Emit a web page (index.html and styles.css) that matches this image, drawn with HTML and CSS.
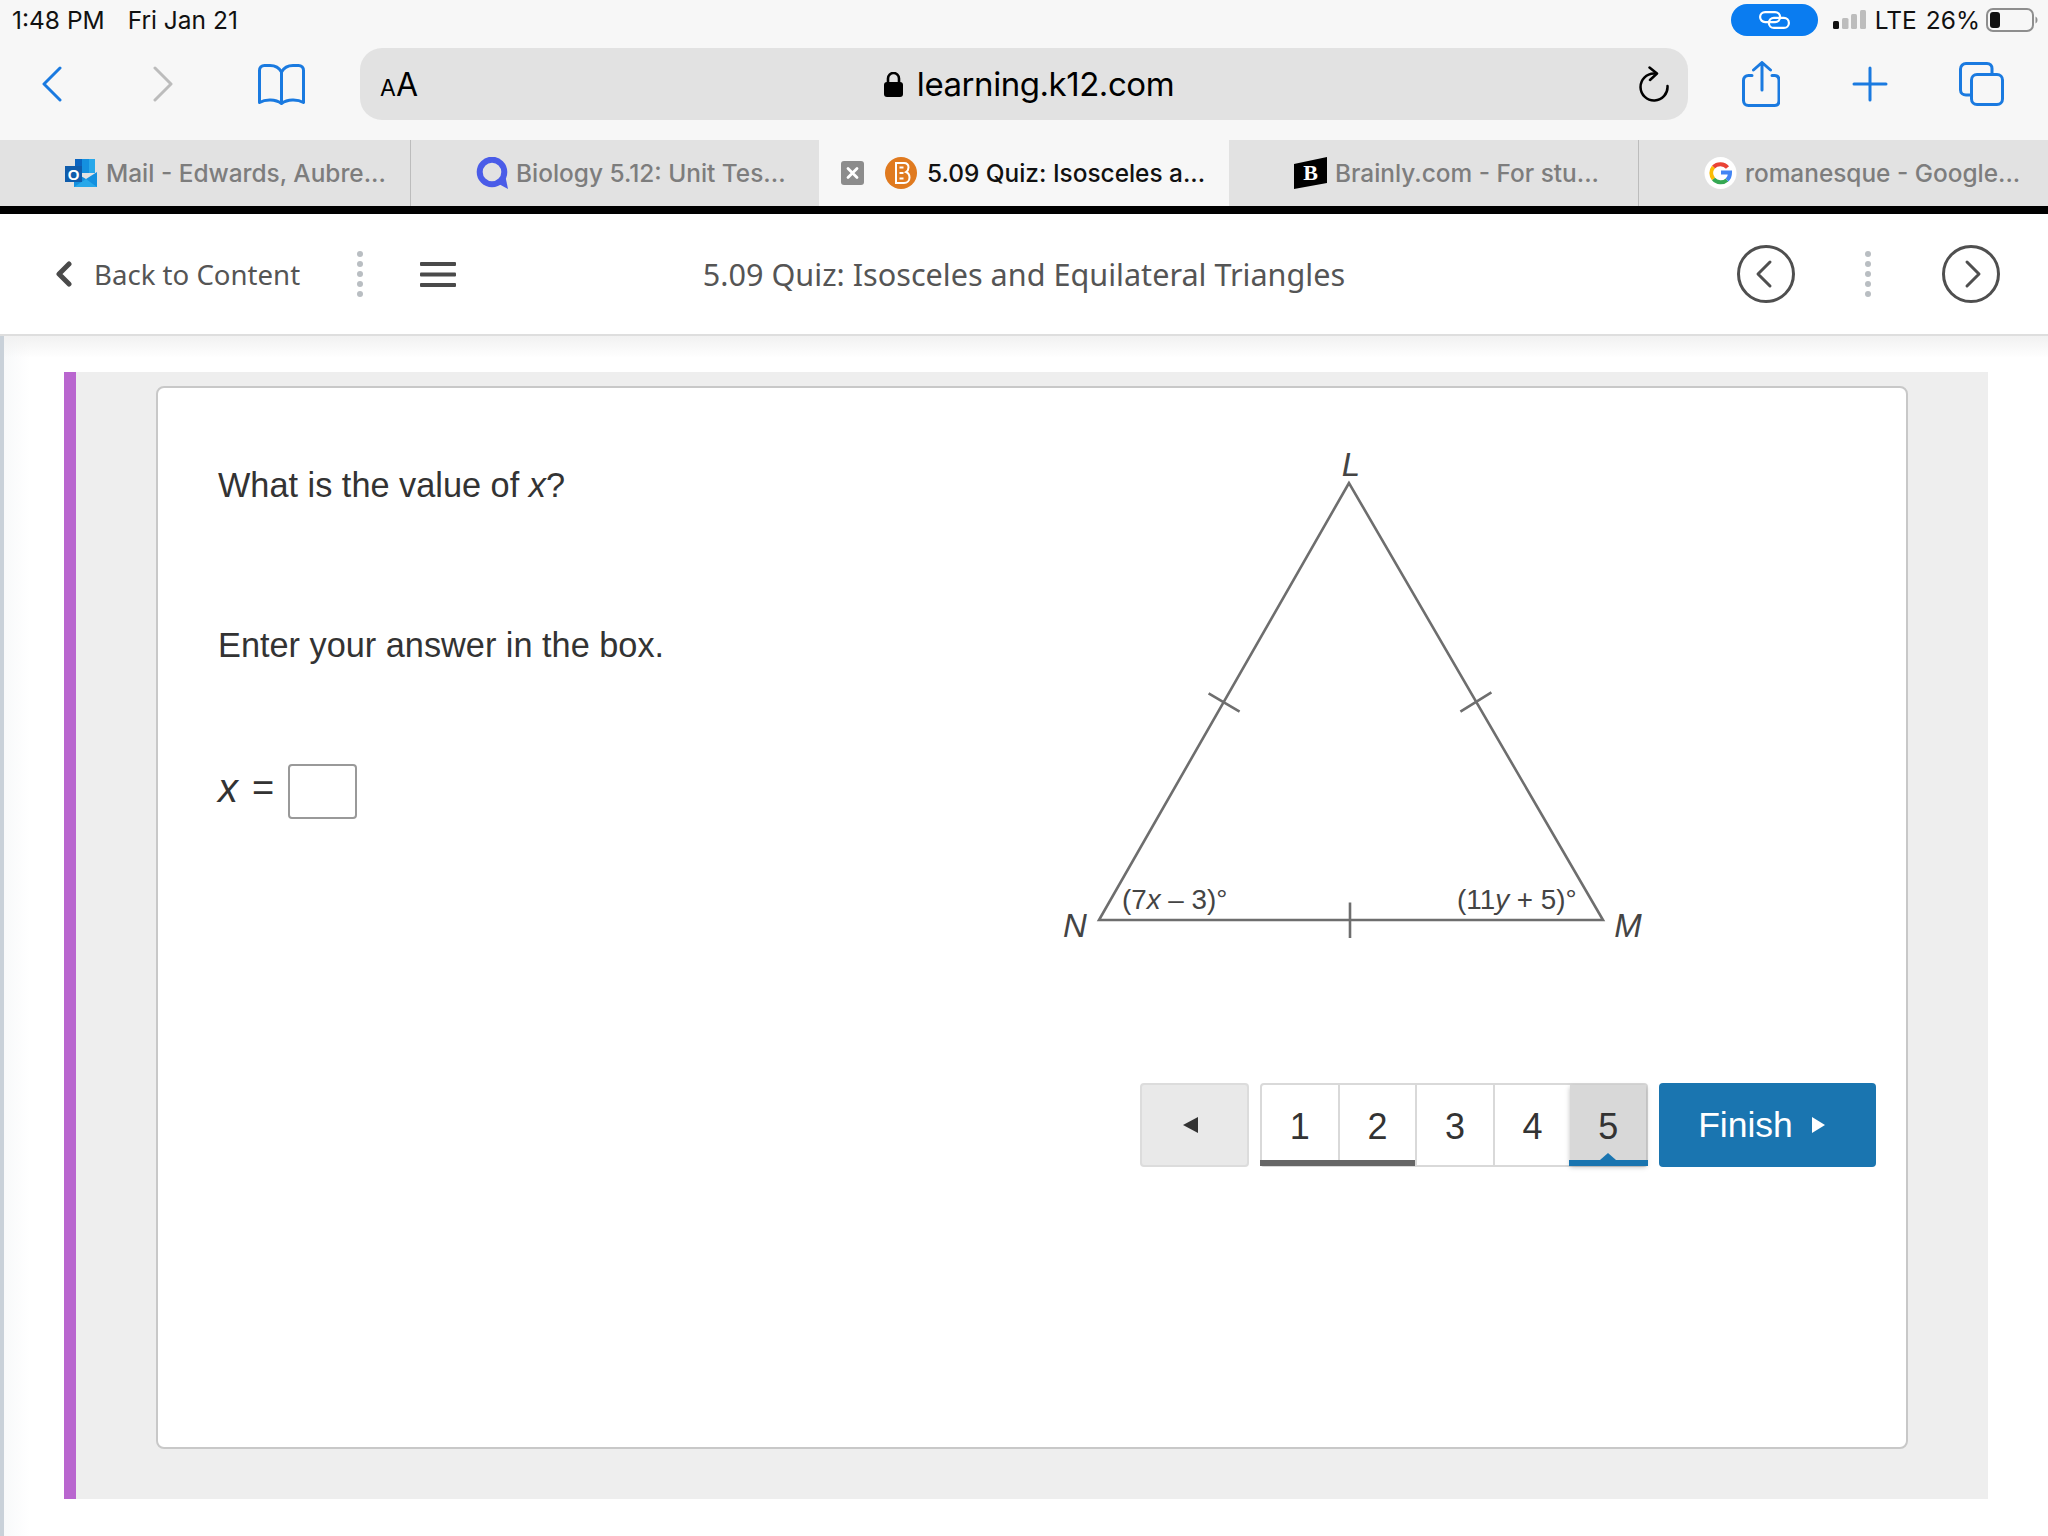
FILE: index.html
```html
<!DOCTYPE html>
<html lang="en">
<head>
<meta charset="utf-8">
<title>5.09 Quiz: Isosceles and Equilateral Triangles</title>
<link rel="stylesheet" href="styles.css">
</head>
<body>
<div class="chrome">
  <div class="status">
    <div class="status-left"><span>1:48 PM</span><span>Fri Jan 21</span></div>
    <div class="status-right">
      <div class="link-pill">
        <svg width="31" height="18" viewBox="0 0 31 18" fill="none" stroke="#fff" stroke-width="2.200"><rect x="1.100" y="1.100" width="20" height="10" rx="5"/><rect x="9.900" y="6.900" width="20" height="10" rx="5"/></svg>
      </div>
      <svg class="signal" width="33" height="19" viewBox="0 0 33 19"><rect x="0" y="11" width="6" height="8" rx="1.500" fill="#111"/><rect x="9" y="8" width="6.500" height="11" rx="1.500" fill="#bdbdbd"/><rect x="18" y="4" width="6" height="15" rx="1.500" fill="#bdbdbd"/><rect x="27" y="0" width="6" height="19" rx="1.500" fill="#bdbdbd"/></svg>
      <span class="lte">LTE</span>
      <span class="pct">26%</span>
      <svg class="battery" width="52" height="24" viewBox="0 0 52 24" fill="none"><rect x="1" y="1" width="46" height="22" rx="6" stroke="#8e8e8e" stroke-width="2"/><rect x="4" y="4" width="10" height="16" rx="3" fill="#111"/><path d="M49.500 8.500c1.500 .8 2 2 2 3.500s-.5 2.700-2 3.500z" fill="#8e8e8e"/></svg>
    </div>
  </div>
  <div class="toolbar">
    <svg class="i-back" width="20" height="36" viewBox="0 0 20 36" fill="none" stroke="#1a7ae0" stroke-width="3" stroke-linecap="round" stroke-linejoin="round"><path d="M18 2 2 18l16 16"/></svg>
    <svg class="i-fwd" width="20" height="36" viewBox="0 0 20 36" fill="none" stroke="#bcbcbc" stroke-width="3" stroke-linecap="round" stroke-linejoin="round"><path d="M2 2l16 16L2 34"/></svg>
    <svg class="i-book" width="47" height="41" viewBox="0 0 47 41" fill="none" stroke="#1a7ae0" stroke-width="3" stroke-linejoin="round" stroke-linecap="round"><path d="M23.500 8C21 3.500 17 1.500 12 1.500H6.500C3.500 1.500 1.500 3.500 1.500 6.500V38.500c6-3.500 16-3.500 22 1 6-4.500 16-4.500 22-1V6.500c0-3-2-5-5-5H35c-5 0-9 2-11.500 6.500zM23.500 8v31"/></svg>
    <div class="url-pill">
      <div class="aa"><span class="aa-small">A</span><span class="aa-big">A</span></div>
      <div class="url">
        <svg width="19" height="25" viewBox="0 0 19 25"><rect x="0" y="10" width="19" height="15" rx="3" fill="#000"/><path d="M4 11V6.500a5.500 5.500 0 0 1 11 0V11" fill="none" stroke="#000" stroke-width="2.600"/></svg>
        <span>learning.k12.com</span>
      </div>
      <svg width="30" height="36" viewBox="0 0 30 36" fill="none" stroke="#000" stroke-width="2.500" stroke-linecap="round" stroke-linejoin="round"><path d="M28.500 20A13.500 13.500 0 1 1 15 7.500"/><path d="M10.500 1.500 18 7.500l-7 6.500"/></svg>
    </div>
    <svg class="i-share" width="38" height="46" viewBox="0 0 38 46" fill="none" stroke="#1a7ae0" stroke-width="3" stroke-linecap="round" stroke-linejoin="round"><path d="M20 29V2M11.500 9 20 1.500 28.500 9M10 14.500H6.500c-3 0-5 2-5 5v20c0 3 2 5 5 5h26c3 0 4.500-2 4.500-5v-20c0-3-1.500-5-4.500-5H30"/></svg>
    <svg class="i-plus" width="36" height="36" viewBox="0 0 36 36" fill="none" stroke="#1a7ae0" stroke-width="3" stroke-linecap="round"><path d="M18 2v32M2 18h32"/></svg>
    <svg class="i-tabs" width="45" height="44" viewBox="0 0 45 44" fill="none" stroke="#1a7ae0" stroke-width="3" stroke-linejoin="round"><path d="M11 33H7c-3 0-5.500-2-5.500-5V7C1.500 4 4 1.500 7 1.500h21c3 0 5 2 5 5V11"/><rect x="12.500" y="12.500" width="31" height="30" rx="5.500"/></svg>
  </div>
  <div class="tabs">
    <div class="tab">
      <svg width="33" height="28" viewBox="0 0 33 28"><rect x="10" y="0" width="7" height="14" fill="#0a64c0"/><rect x="17" y="0" width="7" height="14" fill="#1490df"/><rect x="24" y="0" width="6" height="14" fill="#28a8ea"/><path d="M9 13l12 7 11-7v15H9z" fill="#1490df"/><path d="M9 28l12-8 11 8z" fill="#28a8ea"/><rect x="0" y="7" width="17" height="16" fill="#0f5cab"/><text x="8.500" y="20.500" class="fav-o" text-anchor="middle">O</text></svg>
      <span>Mail - Edwards, Aubre...</span>
    </div>
    <div class="tab">
      <svg width="32" height="32" viewBox="0 0 32 32" fill="none"><circle cx="16" cy="15" r="12.300" stroke="#4a5ce8" stroke-width="6"/><path d="M21 26 32 32 29.500 20z" fill="#4a5ce8"/></svg>
      <span>Biology 5.12: Unit Tes...</span>
    </div>
    <div class="tab tab-active">
      <svg width="23" height="24" viewBox="0 0 23 24"><rect width="23" height="24" rx="3" fill="#8c8c8c"/><path d="M7 7.500l9 9M16 7.500l-9 9" stroke="#fff" stroke-width="2.800" stroke-linecap="round"/></svg>
      <svg width="32" height="32" viewBox="0 0 32 32"><circle cx="16" cy="16" r="16" fill="#e07a1f"/><path d="M11 6h8c3 0 4.500 2 4.500 4.500 0 2-1 3.500-2.500 4.500 2.500 1 3.500 3 3.500 5.500 0 3-2 5.500-5.500 5.500h-8z" fill="none" stroke="#fff" stroke-width="2"/><path d="M14.500 10.500h4M14.500 16h4M14.500 21.500h4" stroke="#fff" stroke-width="1.800"/></svg>
      <span>5.09 Quiz: Isosceles a...</span>
    </div>
    <div class="tab">
      <svg width="33" height="32" viewBox="0 0 33 32"><path d="M0 7 33 0v26L0 32z" fill="#000"/><text x="16.500" y="23" class="fav-b" text-anchor="middle">B</text></svg>
      <span>Brainly.com - For stu...</span>
    </div>
    <div class="tab">
      <svg width="33" height="32" viewBox="0 0 33 32" fill="none"><circle cx="16.500" cy="16" r="16" fill="#fff"/><path d="M23.500 10.500A9.500 9.500 0 0 0 9.500 10" stroke="#ea4335" stroke-width="4"/><path d="M9.500 10a9.500 9.500 0 0 0 0 12" stroke="#fbbc05" stroke-width="4"/><path d="M9.500 22a9.500 9.500 0 0 0 13.500 1" stroke="#34a853" stroke-width="4"/><path d="M23 23c2-1.700 3-4 3-7.500h-9" stroke="#4285f4" stroke-width="4"/></svg>
      <span>romanesque - Google...</span>
    </div>
  </div>
</div>

<header class="lesson-bar">
  <div class="lb-left">
    <svg width="17" height="26" viewBox="0 0 17 26" fill="none" stroke="#4a4a4a" stroke-width="5" stroke-linecap="round" stroke-linejoin="round"><path d="M14 3 4 13l10 10"/></svg>
    <span class="back-text">Back to Content</span>
    <svg class="dots dots-left" width="8" height="48" viewBox="0 0 8 48" fill="#b9bec2"><circle cx="4" cy="4" r="3"/><circle cx="4" cy="14" r="3"/><circle cx="4" cy="24" r="3"/><circle cx="4" cy="34" r="3"/><circle cx="4" cy="44" r="3"/></svg>
    <svg class="burger" width="36" height="25" viewBox="0 0 36 25" fill="#4a4a4a"><rect width="36" height="4" rx="1"/><rect y="10.500" width="36" height="4" rx="1"/><rect y="21" width="36" height="4" rx="1"/></svg>
  </div>
  <div class="lb-title">5.09 Quiz: Isosceles and Equilateral Triangles</div>
  <div class="lb-right">
    <svg width="58" height="58" viewBox="0 0 58 58" fill="none" stroke="#4f4f4f" stroke-width="3" stroke-linecap="round" stroke-linejoin="round"><circle cx="29" cy="29" r="27.500"/><path d="M33 17 21 29l12 12"/></svg>
    <svg class="dots dots-right" width="8" height="48" viewBox="0 0 8 48" fill="#b9bec2"><circle cx="4" cy="4" r="3"/><circle cx="4" cy="14" r="3"/><circle cx="4" cy="24" r="3"/><circle cx="4" cy="34" r="3"/><circle cx="4" cy="44" r="3"/></svg>
    <svg width="58" height="58" viewBox="0 0 58 58" fill="none" stroke="#4f4f4f" stroke-width="3" stroke-linecap="round" stroke-linejoin="round"><circle cx="29" cy="29" r="27.500"/><path d="M25 17l12 12-12 12"/></svg>
  </div>
</header>

<main class="stage">
  <section class="panel">
    <div class="card">
      <div class="content">
        <div class="question">
          <p class="q-line q-first">What is the value of <i>x</i>?</p>
          <p class="q-line">Enter your answer in the box.</p>
          <div class="answer"><i>x</i><span>=</span><input class="answer-box" type="text" aria-label="x"></div>
        </div>
        <svg class="figure" width="600" height="510" viewBox="1050 440 600 510" fill="none">
          <path class="edge" d="M1349 483 1099 920H1603Z"/>
          <path class="edge" d="M1208.600 693.400 1239.600 711.700M1460.400 711.700 1491.400 692.400M1350 902.400V938"/>
          <text x="1351" y="476" class="pt" text-anchor="middle">L</text>
          <text x="1075" y="937" class="pt" text-anchor="middle">N</text>
          <text x="1628" y="937" class="pt" text-anchor="middle">M</text>
          <text x="1122" y="909" class="ang">(7<tspan class="it">x</tspan> – 3)°</text>
          <text x="1457" y="909" class="ang">(11<tspan class="it">y</tspan> + 5)°</text>
        </svg>
      </div>
      <nav class="pager">
        <button class="pg-prev" type="button" aria-label="Previous"><span class="tri-left"></span></button>
        <div class="pg-group">
          <div class="pg-cell done">1</div>
          <div class="pg-cell done">2</div>
          <div class="pg-cell">3</div>
          <div class="pg-cell">4</div>
          <div class="pg-cell current">5</div>
        </div>
        <button class="pg-finish" type="button">Finish<span class="tri-right"></span></button>
      </nav>
    </div>
  </section>
</main>
</body>
</html>
```

FILE: styles.css
```css
* { box-sizing: border-box; }
html, body { margin: 0; padding: 0; }
body {
  width: 2048px;
  height: 1536px;
  overflow: hidden;
  background: #fff;
  font-family: "Liberation Sans", Arial, sans-serif;
  color: #333;
}
svg { display: block; flex: none; }

/* Browser chrome */
.chrome { background: #f7f7f7; font-family: Inter, "Liberation Sans", sans-serif; }
.status {
  height: 44px;
  padding: 0 10px 5px 12px;
  display: flex;
  align-items: center;
  justify-content: space-between;
  font-size: 24.500px;
  color: #111;
}
.status-left { display: flex; gap: 23px; }
.status-right { display: flex; align-items: center; }
.link-pill {
  width: 87px;
  height: 32px;
  border-radius: 16px;
  background: #0a7cf0;
  display: flex;
  align-items: center;
  justify-content: center;
  margin-right: 15px;
}
.signal { margin-right: 9px; }
.lte { margin-right: 9px; }
.pct { margin-right: 6px; }

.toolbar {
  height: 96px;
  padding: 0 0 16px 42px;
  display: flex;
  align-items: center;
}
.i-fwd { margin-left: 91px; }
.i-book { margin-left: 85px; }
.url-pill {
  margin-left: 55px;
  width: 1328px;
  height: 72px;
  border-radius: 22px;
  background: #e2e2e2;
  padding: 0 19px 0 20px;
  display: flex;
  align-items: center;
  justify-content: space-between;
  color: #000;
}
.aa { display: flex; align-items: baseline; width: 39px; }
.aa-small { font-size: 23px; }
.aa-big { font-size: 32px; }
.url { display: flex; align-items: center; gap: 14px; font-size: 33px; letter-spacing: -.45px; }
.i-share { margin-left: 54px; }
.i-plus { margin-left: 72px; }
.i-tabs { margin-left: 71px; }

.tabs {
  height: 74px;
  display: grid;
  grid-template-columns: 410px 409px 410px 409px 410px;
  border-bottom: 8px solid #000;
  font-size: 24.400px;
  font-weight: 500;
  color: #7d7d7d;
}
.tab {
  background: #e2e2e2;
  border-left: 1px solid #bcbcbc;
  padding-left: 65px;
  display: flex;
  align-items: center;
  gap: 8px;
  white-space: nowrap;
  overflow: hidden;
}
.tab:first-child { border-left: 0; }
.tab-active {
  background: #f7f7f7;
  border-left: 0;
  padding-left: 22px;
  color: #111;
  gap: 10px;
}
.tab-active + .tab { border-left: 0; }
.tab-active svg:first-child { margin-right: 11px; }
.fav-o { font: bold 15px "Liberation Sans", sans-serif; fill: #fff; }
.fav-b { font: bold 22px "Liberation Serif", serif; fill: #fff; }

/* Lesson bar */
.lesson-bar {
  height: 122px;
  padding-bottom: 0;
  display: grid;
  grid-template-columns: 1fr auto 1fr;
  align-items: center;
  background: #fff;
  border-bottom: 2px solid #dedede;
  font-family: "Noto Sans", "Open Sans", sans-serif;
  color: #555;
}
.lb-left { display: flex; align-items: center; padding-left: 55px; }
.back-text { margin-left: 22px; font-size: 27.600px; }
.dots-left { margin-left: 56px; }
.burger { margin-left: 56px; }
.lb-title { font-size: 30.600px; }
.lb-right { display: flex; align-items: center; justify-content: flex-end; padding-right: 48px; }
.dots-right { margin: 0 70px 0 69px; }

/* Stage */
.stage {
  height: 1200px;
  padding: 36px 60px 0 60px;
  border-left: 4px solid #c9d1d9;
  background:
    linear-gradient(to bottom, #f1f1f1, rgba(255,255,255,0) 22px),
    linear-gradient(to right, #f8f9fa, #fff 26px);
}
.panel {
  height: 1127px;
  border-left: 12px solid #b966cf;
  background: #eee;
  padding: 14px 80px 50px 80px;
}
.card {
  height: 1063px;
  background: #fff;
  border: 2px solid #c8c8c8;
  border-radius: 8px;
}
.content { display: flex; justify-content: space-between; height: 695px; }
.question { padding: 77px 0 0 60px; font-size: 34.300px; }
.q-line { margin: 0 0 120px; line-height: 40px; height: 40px; white-space: nowrap; }
.answer {
  margin-top: -21px;
  display: flex;
  align-items: center;
  gap: 14px;
  font-size: 38px;
}
.answer i { font-size: 40px; margin-bottom: 6px; }
.answer span { margin-bottom: 6px; }
.answer-box {
  width: 69px;
  height: 55px;
  margin: 0;
  padding: 0;
  border: 2px solid #999;
  border-radius: 4px;
  background: #fff;
}
.figure { margin: 52px 256px 0 0; }
.edge { stroke: #6e6e6e; stroke-width: 2.600; }
.pt { font: italic 33px "Liberation Sans", sans-serif; fill: #444; stroke: none; }
.ang { font: 27.800px "Liberation Sans", sans-serif; fill: #444; stroke: none; }
.it { font-style: italic; }

/* Pager */
.pager {
  display: flex;
  justify-content: flex-end;
  gap: 11px;
  padding-right: 30px;
}
.pg-prev {
  width: 109px;
  height: 84px;
  padding: 0 8px 0 0;
  background: #e9e9e9;
  border: 2px solid #dcdcdc;
  border-radius: 4px;
  display: flex;
  align-items: center;
  justify-content: center;
}
.tri-left {
  border-style: solid;
  border-width: 8px 15px 8px 0;
  border-color: transparent #333 transparent transparent;
}
.pg-group {
  width: 388px;
  height: 84px;
  display: flex;
  border: 2px solid #d9d9d9;
  border-radius: 4px;
  font-size: 36px;
}
.pg-cell {
  flex: 1;
  position: relative;
  padding-top: 3px;
  display: flex;
  align-items: center;
  justify-content: center;
  border-left: 2px solid #d9d9d9;
  color: #333;
}
.pg-cell:first-child { border-left: 0; }
.pg-cell.done::after {
  content: "";
  position: absolute;
  left: -2px;
  right: 0;
  bottom: -1px;
  height: 6px;
  background: #666;
}
.pg-cell.current {
  background: #d8d8d8;
  border-left: 0;
  box-shadow: 0 2px 5px rgba(0,0,0,.25);
}
.pg-cell.current::after {
  content: "";
  position: absolute;
  left: -1px;
  right: -2px;
  bottom: -1px;
  height: 6px;
  background: #1a75b0;
}
.pg-cell.current::before {
  content: "";
  position: absolute;
  left: 50%;
  margin-left: -8px;
  bottom: 5px;
  border-style: solid;
  border-width: 0 8px 7px;
  border-color: transparent transparent #1a75b0;
}
.pg-finish {
  width: 217px;
  height: 84px;
  padding: 0 12px 0 0;
  border: 0;
  border-radius: 4px;
  background: #1a75b0;
  color: #fff;
  font: 35.500px "Liberation Sans", sans-serif;
  display: flex;
  align-items: center;
  justify-content: center;
  gap: 19px;
}
.tri-right {
  border-style: solid;
  border-width: 8px 0 8px 13px;
  border-color: transparent transparent transparent #fff;
}
```
